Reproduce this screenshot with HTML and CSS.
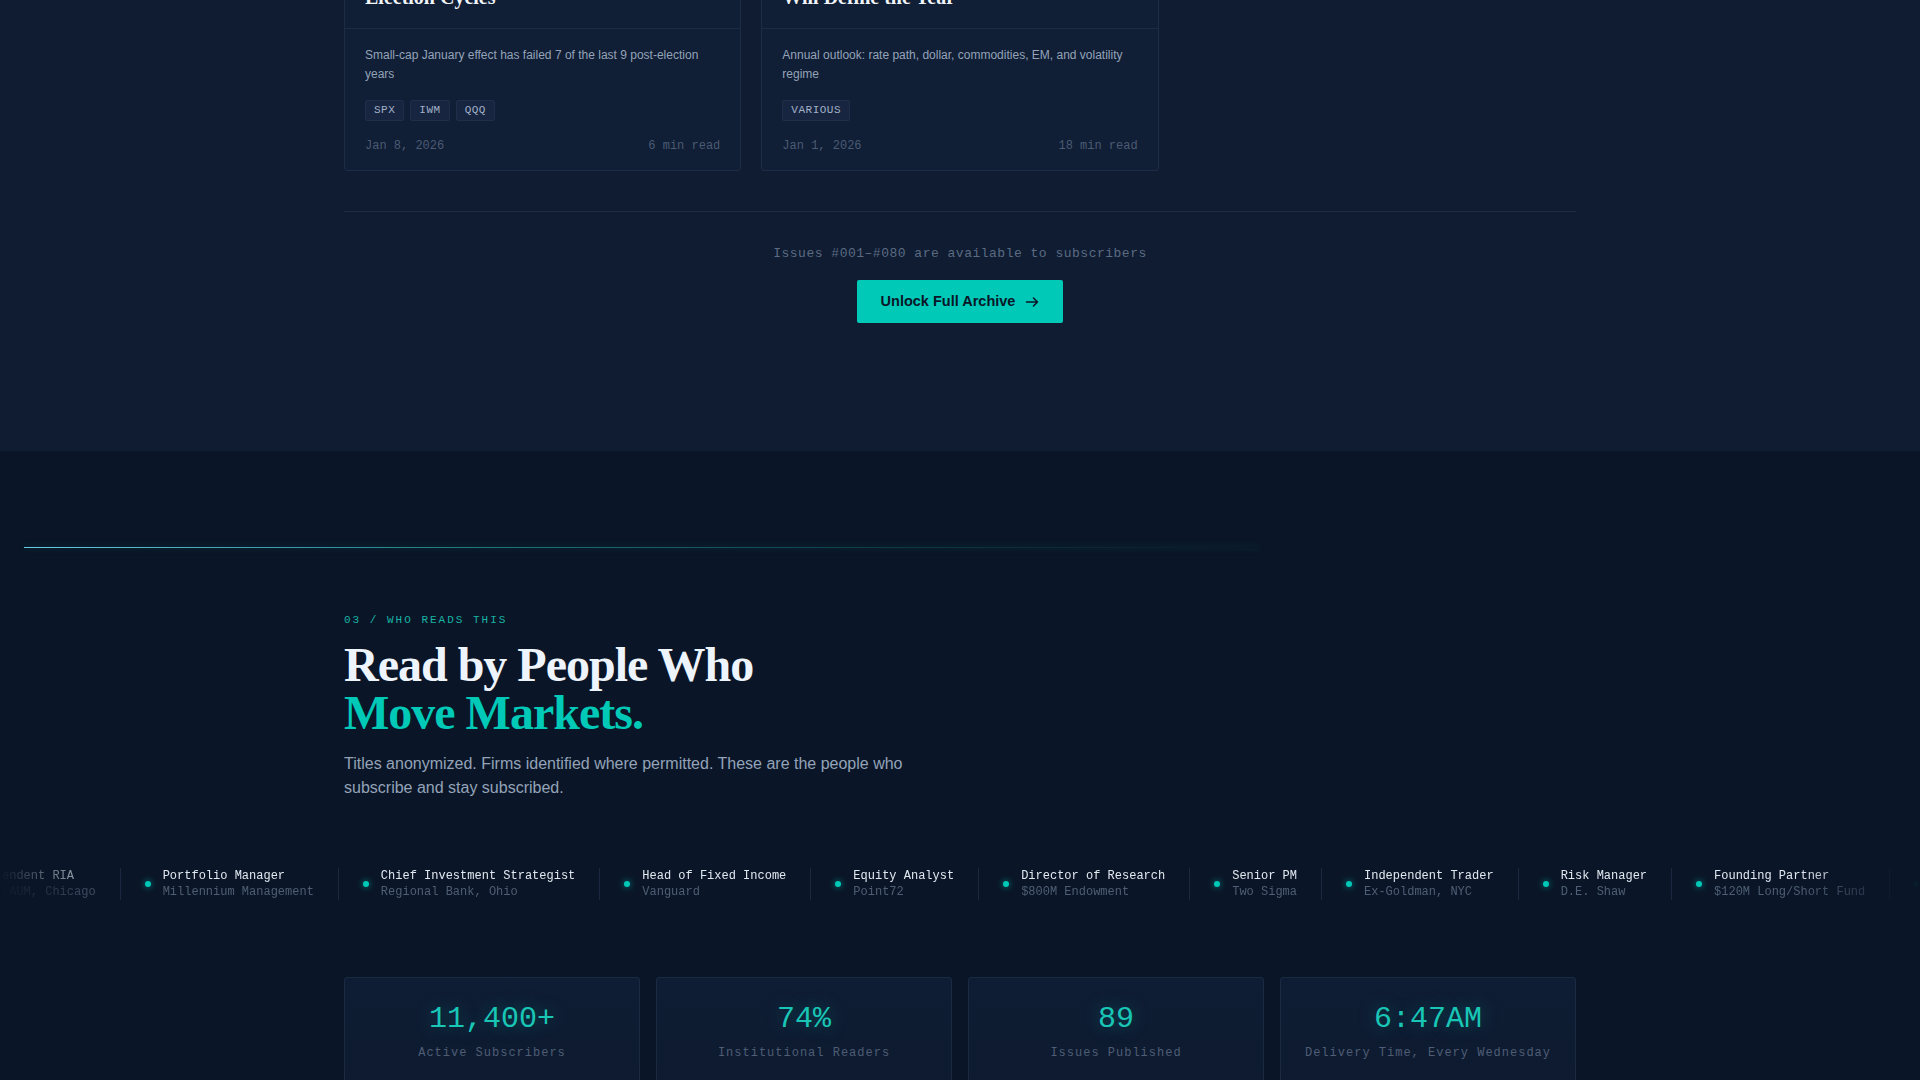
FILE: index.html
```html
<!DOCTYPE html>
<html lang="en">
<head>
  <meta charset="UTF-8">
  <meta name="viewport" content="width=device-width, initial-scale=1.0">
  <title>The Wednesday Tape</title>
  <link rel="stylesheet" href="styles.css">
</head>
<body>
  <!-- Archive: latest free issues -->
  <section class="archive">
    <div class="container">
      <div class="issue-grid">
        <article class="issue-card">
          <div class="issue-head">
            <h3 class="issue-title">The Small-Cap Trap in Post-<br>Election Cycles</h3>
          </div>
          <div class="issue-body">
            <p class="issue-desc">Small-cap January effect has failed 7 of the last 9 post-election years</p>
            <div class="issue-tags">
              <span class="tag">SPX</span>
              <span class="tag">IWM</span>
              <span class="tag">QQQ</span>
            </div>
            <div class="issue-meta">
              <span>Jan 8, 2026</span>
              <span>6 min read</span>
            </div>
          </div>
        </article>
        <article class="issue-card">
          <div class="issue-head">
            <h3 class="issue-title">Ten Macro Themes That<br>Will Define the Year</h3>
          </div>
          <div class="issue-body">
            <p class="issue-desc">Annual outlook: rate path, dollar, commodities, EM, and volatility regime</p>
            <div class="issue-tags">
              <span class="tag">VARIOUS</span>
            </div>
            <div class="issue-meta">
              <span>Jan 1, 2026</span>
              <span>18 min read</span>
            </div>
          </div>
        </article>
      </div>

      <div class="archive-foot">
        <p class="archive-note">Issues #001–#080 are available to subscribers</p>
        <a href="#" class="btn-primary">
          Unlock Full Archive
          <svg width="14" height="14" viewBox="0 0 14 14" fill="none" stroke="currentColor" stroke-width="1.6" stroke-linecap="round" stroke-linejoin="round"><path d="M1.5 7h11M8.5 3l4 4-4 4"/></svg>
        </a>
      </div>
    </div>
  </section>

  <!-- 03 / Readers -->
  <section class="readers">
    <div class="scan-line"></div>
    <div class="container">
      <div class="eyebrow">03 / WHO READS THIS</div>
      <h2 class="section-title">Read by People Who<br><span class="accent">Move Markets.</span></h2>
      <p class="section-lead">Titles anonymized. Firms identified where permitted. These are the people who subscribe and stay subscribed.</p>
    </div>

    <div class="ticker">
      <div class="ticker-track">
        <div class="reader"><span class="dot"></span><div><div class="reader-role">Independent RIA</div><div class="reader-firm">$400M AUM, Chicago</div></div></div>
        <div class="reader"><span class="dot"></span><div><div class="reader-role">Portfolio Manager</div><div class="reader-firm">Millennium Management</div></div></div>
        <div class="reader"><span class="dot"></span><div><div class="reader-role">Chief Investment Strategist</div><div class="reader-firm">Regional Bank, Ohio</div></div></div>
        <div class="reader"><span class="dot"></span><div><div class="reader-role">Head of Fixed Income</div><div class="reader-firm">Vanguard</div></div></div>
        <div class="reader"><span class="dot"></span><div><div class="reader-role">Equity Analyst</div><div class="reader-firm">Point72</div></div></div>
        <div class="reader"><span class="dot"></span><div><div class="reader-role">Director of Research</div><div class="reader-firm">$800M Endowment</div></div></div>
        <div class="reader"><span class="dot"></span><div><div class="reader-role">Senior PM</div><div class="reader-firm">Two Sigma</div></div></div>
        <div class="reader"><span class="dot"></span><div><div class="reader-role">Independent Trader</div><div class="reader-firm">Ex-Goldman, NYC</div></div></div>
        <div class="reader"><span class="dot"></span><div><div class="reader-role">Risk Manager</div><div class="reader-firm">D.E. Shaw</div></div></div>
        <div class="reader"><span class="dot"></span><div><div class="reader-role">Founding Partner</div><div class="reader-firm">$120M Long/Short Fund</div></div></div>
        <div class="reader"><span class="dot"></span><div><div class="reader-role">Macro Strategist</div><div class="reader-firm">Family Office, Miami</div></div></div>
      </div>
    </div>

    <div class="container">
      <div class="stats">
        <div class="stat"><div class="stat-value">11,400+</div><div class="stat-label">Active Subscribers</div></div>
        <div class="stat"><div class="stat-value">74%</div><div class="stat-label">Institutional Readers</div></div>
        <div class="stat"><div class="stat-value">89</div><div class="stat-label">Issues Published</div></div>
        <div class="stat"><div class="stat-value">6:47AM</div><div class="stat-label">Delivery Time, Every Wednesday</div></div>
      </div>
    </div>
  </section>
</body>
</html>
```

FILE: styles.css
```css
:root {
  --navy: #0f1c32;
  --ink: #0a1628;
  --card: #101e36;
  --border: #1d2b44;
  --teal: #00c9b7;
  --teal-dim: #17b3a3;
  --text: #f1f5f9;
  --muted: #94a3b8;
  --faint: #4b5b73;
  --sans: "Liberation Sans", Arial, sans-serif;
  --serif: "Liberation Serif", "Times New Roman", serif;
  --mono: "Liberation Mono", "Courier New", monospace;
}
* { box-sizing: border-box; }
body {
  margin: 0;
  font-family: var(--sans);
  background: var(--ink);
  color: var(--text);
  overflow: hidden;
}
.container {
  max-width: 1232px;
  margin: 0 auto;
}

/* Archive */
.archive {
  background: var(--navy);
  margin-top: -63px;
  padding-bottom: 128px;
}
.issue-grid {
  display: grid;
  grid-template-columns: repeat(3, 1fr);
  gap: 20px;
}
.issue-card {
  background: var(--card);
  border: 1px solid var(--border);
  border-radius: 3px;
}
.issue-head {
  padding: 20px 20px 18px;
  border-bottom: 1px solid var(--border);
}
.issue-title {
  margin: 0;
  font-family: var(--serif);
  font-size: 20px;
  line-height: 1.3;
  font-weight: bold;
  color: var(--text);
}
.issue-body {
  padding: 17px 20px 15px;
}
.issue-desc {
  margin: 0 0 16px;
  font-size: 12px;
  line-height: 1.6;
  color: var(--muted);
}
.issue-tags {
  display: flex;
  gap: 6px;
}
.tag {
  font-family: var(--mono);
  font-size: 11px;
  line-height: 13px;
  letter-spacing: 0.5px;
  padding: 3px 8px;
  color: #a3b1c6;
  background: #172541;
  border: 1px solid #1f2e49;
  border-radius: 2px;
}
.issue-meta {
  display: flex;
  justify-content: space-between;
  margin-top: 16px;
  font-family: var(--mono);
  font-size: 12px;
  line-height: 18px;
  color: var(--faint);
}
.archive-foot {
  margin-top: 40px;
  border-top: 1px solid var(--border);
  padding-top: 32px;
  text-align: center;
}
.archive-note {
  margin: 0 0 16px;
  font-family: var(--mono);
  font-size: 13px;
  line-height: 20px;
  letter-spacing: 0.5px;
  color: #5b6b82;
}
.btn-primary {
  display: inline-flex;
  align-items: center;
  gap: 10px;
  padding: 13px 24px;
  background: var(--teal);
  color: var(--ink);
  font-size: 14.5px;
  line-height: 17px;
  font-weight: bold;
  text-decoration: none;
  border-radius: 2px;
}

/* Readers */
.readers {
  background: var(--ink);
  padding-top: 96px;
  padding-bottom: 40px;
}
.scan-line {
  width: 1236px;
  height: 1px;
  margin-left: 24px;
  background: linear-gradient(90deg, #67cde0 0%, rgba(45, 190, 190, 0.6) 35%, rgba(20, 170, 160, 0.25) 70%, transparent 100%);
  box-shadow: 0 0 6px rgba(0, 201, 183, 0.25);
}
.eyebrow {
  margin-top: 64px;
  font-family: var(--mono);
  font-size: 11px;
  line-height: 16px;
  letter-spacing: 2px;
  color: var(--teal-dim);
}
.section-title {
  margin: 13px 0 0;
  font-family: var(--serif);
  font-size: 48px;
  line-height: 1;
  letter-spacing: -1px;
  font-weight: bold;
  color: #eef4fc;
}
.section-title .accent { color: var(--teal); }
.section-lead {
  margin: 15px 0 0;
  max-width: 580px;
  font-size: 16px;
  line-height: 24px;
  color: var(--muted);
}

/* Reader ticker */
.ticker {
  margin-top: 68px;
  overflow: hidden;
  -webkit-mask-image: linear-gradient(90deg, transparent 0, #000 120px, #000 calc(100% - 120px), transparent 100%);
  mask-image: linear-gradient(90deg, transparent 0, #000 120px, #000 calc(100% - 120px), transparent 100%);
}
.ticker-track {
  display: flex;
  width: max-content;
  transform: translateX(-76px);
}
.reader {
  display: flex;
  align-items: center;
  gap: 12px;
  padding: 0 24px;
  border-right: 1px solid #1a2940;
  font-family: var(--mono);
  font-size: 12px;
  line-height: 16px;
  white-space: nowrap;
}
.dot {
  width: 6px;
  height: 6px;
  border-radius: 50%;
  background: var(--teal);
  box-shadow: 0 0 6px rgba(0, 201, 183, 0.7);
}
.reader-role { color: #e2e8f0; }
.reader-firm { color: #4f5e74; }

/* Stats */
.stats {
  margin-top: 77px;
  display: grid;
  grid-template-columns: repeat(4, 1fr);
  gap: 16px;
}
.stat {
  background: linear-gradient(180deg, #0f1d34 0%, #0d1a2f 100%);
  border: 1px solid #1a2a43;
  border-radius: 3px;
  padding: 23px 20px 28px;
  text-align: center;
}
.stat-value {
  font-family: var(--mono);
  font-size: 30px;
  line-height: 36px;
  color: #19c6b6;
  text-shadow: 0 0 18px rgba(0, 201, 183, 0.35);
}
.stat-label {
  margin-top: 8px;
  font-family: var(--mono);
  font-size: 12px;
  line-height: 16px;
  letter-spacing: 1px;
  color: #4f5d75;
}
```
